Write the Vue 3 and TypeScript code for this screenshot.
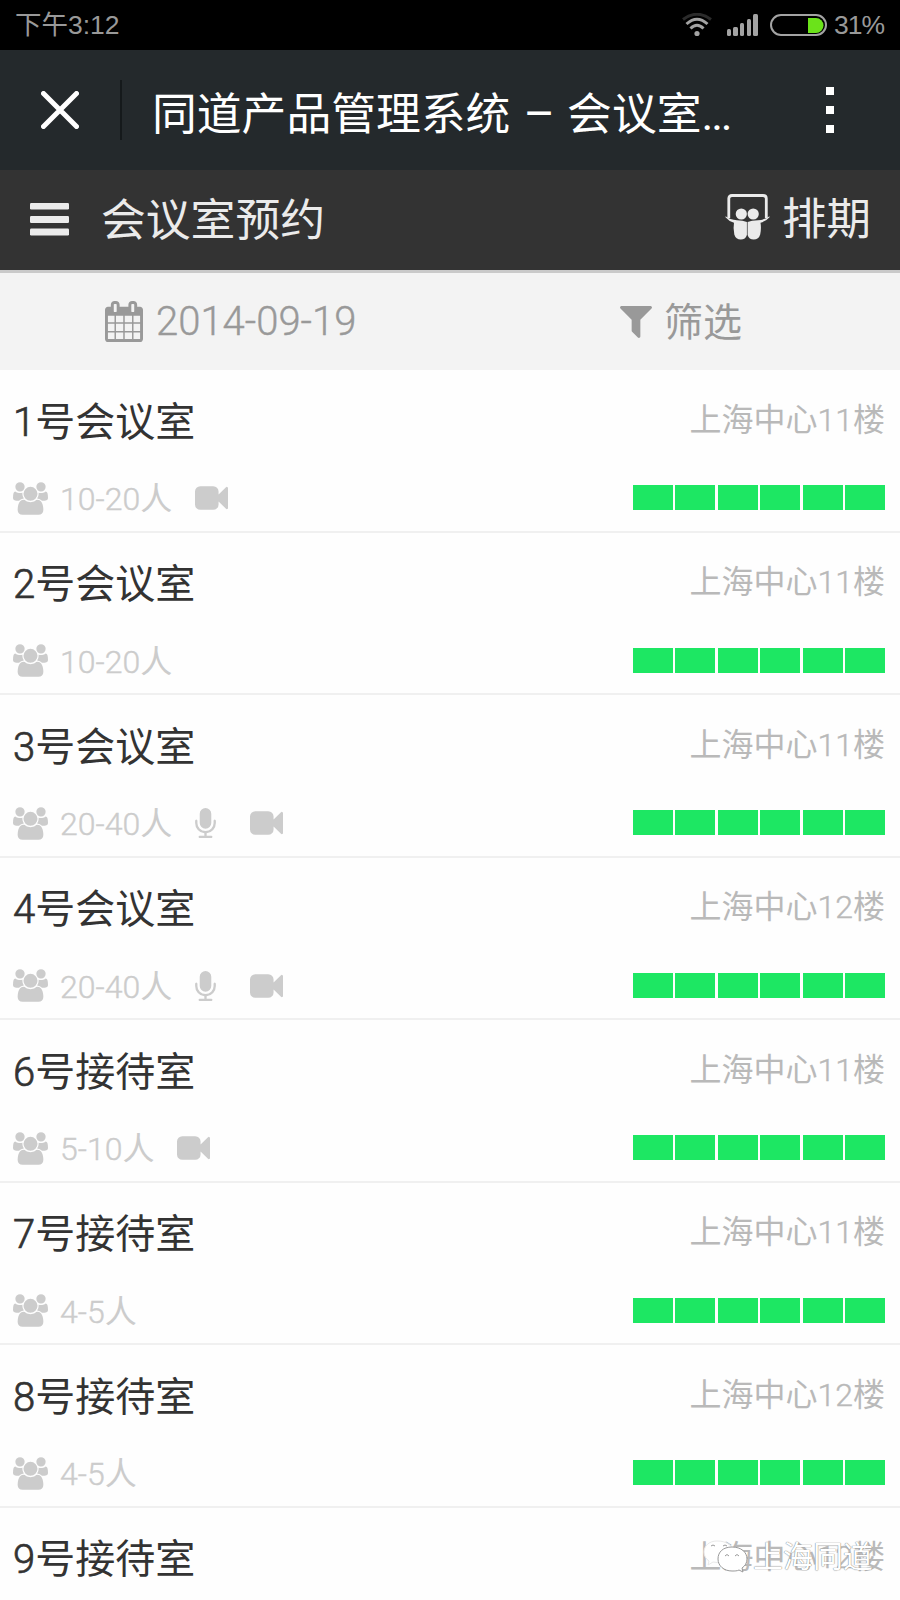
<script setup lang="ts">
interface Room {
  name: string
  floor: string
  seats: string
  mic?: boolean
  video?: boolean
}

interface Run {
  text: string
  latin: boolean
}

const rooms: Room[] = [
  { name: '1号会议室', floor: '上海中心11楼', seats: '10-20人', video: true },
  { name: '2号会议室', floor: '上海中心11楼', seats: '10-20人' },
  { name: '3号会议室', floor: '上海中心11楼', seats: '20-40人', mic: true, video: true },
  { name: '4号会议室', floor: '上海中心12楼', seats: '20-40人', mic: true, video: true },
  { name: '6号接待室', floor: '上海中心11楼', seats: '5-10人', video: true },
  { name: '7号接待室', floor: '上海中心11楼', seats: '4-5人' },
  { name: '8号接待室', floor: '上海中心12楼', seats: '4-5人' },
  { name: '9号接待室', floor: '上海中心12楼', seats: '4-5人' },
]

// Splits a label so that figures can be set lighter than the Chinese text.
const runs = (label: string): Run[] =>
  (label.match(/[\d-]+|[^\d-]+/g) ?? []).map((text) => ({ text, latin: /^[\d-]/.test(text) }))
</script>

<template>
  <div class="screen">
    <div class="status">
      <span class="time">下午3:12</span>
      <svg class="wifi" width="30" height="24" viewBox="0 0 30 24" fill="none" stroke-width="3">
        <path d="M1 6.500Q15 -4 29 6.500" stroke="#2b2b2b" />
        <path d="M4.500 11Q15 1.500 25.500 11" stroke="#a3a3a3" />
        <path d="M8.500 15.500Q15 9 21.500 15.500" stroke="#a3a3a3" />
        <circle cx="15" cy="20.500" r="2.600" fill="#a3a3a3" />
      </svg>
      <svg class="signal" width="31" height="22" viewBox="0 0 31 22" fill="#a3a3a3">
        <rect x="0" y="15" width="4" height="7" rx="1.500" />
        <rect x="6" y="13" width="5" height="9" rx="1.500" />
        <rect x="13" y="9" width="4" height="13" rx="1.500" />
        <rect x="20" y="5" width="4" height="17" rx="1.500" />
        <rect x="26" y="0" width="5" height="22" rx="1.500" />
      </svg>
      <svg class="battery" width="57" height="22" viewBox="0 0 57 22">
        <rect x="1" y="1" width="55" height="20" rx="10" fill="none" stroke="#a3a3a3" stroke-width="2" />
        <path d="M38 4h8a7.500 7.500 0 0 1 0 15h-8z" fill="#6be31a" />
      </svg>
      <span class="percent">31%</span>
    </div>

    <div class="browser">
      <svg class="close" width="38" height="38" viewBox="0 0 38 38" stroke="#fff" stroke-width="5" stroke-linecap="round">
        <path d="M2.500 2.500L35.500 35.500M35.500 2.500L2.500 35.500" />
      </svg>
      <i class="divider"></i>
      <span class="page-title">同道产品管理系统 <span class="dash">–</span> 会议室<span class="dots">...</span></span>
      <span class="more"><i></i><i></i><i></i></span>
    </div>

    <header class="app-bar">
      <svg class="bars" width="39" height="33" viewBox="0 0 39 33" fill="#ebebeb">
        <rect width="39" height="6.500" rx="1.200" />
        <rect y="13" width="39" height="7" rx="1.200" />
        <rect y="25.500" width="39" height="7" rx="1.200" />
      </svg>
      <span class="app-title">会议室预约</span>
      <svg class="share" width="45" height="46" viewBox="0 0 45 46">
        <path d="M3.800 24V4.500Q3.800 1.500 7 1.500H38Q41.300 1.500 41.300 4.500V24" fill="none" stroke="#ebebeb" stroke-width="2.800" />
        <circle cx="16.300" cy="20" r="5.600" fill="#ebebeb" />
        <circle cx="28.200" cy="20" r="5.600" fill="#ebebeb" />
        <path d="M.5 22.200Q5 25.800 12 26.200Q18 26.400 21.900 28V41Q20.500 45.600 15.800 45.600Q10.800 45.600 9.300 40.500Q8 34 9 28.700Q3.500 27 .500 23.200Z" fill="#ebebeb" />
        <path d="M44.500 22.200Q40 25.800 33 26.200Q26.500 26.400 22.600 28V41Q24 45.600 28.700 45.600Q33.700 45.600 35.200 40.500Q36.500 34 35.500 28.700Q41.500 27 44.500 23.200Z" fill="#ebebeb" />
      </svg>
      <span class="schedule">排期</span>
    </header>

    <div class="filters">
      <div class="filter date">
        <svg width="38" height="41" viewBox="64 0 1664 1792" preserveAspectRatio="none" fill="currentColor">
          <path d="M192 1664h288v-288H192v288zm352 0h320v-288H544v288zM192 1312h288V992H192v320zm352 0h320V992H544v320zM192 928h288V640H192v288zm736 736h320v-288H928v288zM544 928h320V640H544v288zm768 736h288v-288h-288v288zm-384-352h320V992H928v320zM576 448V160q0-13-9.500-22.500T544 128h-64q-13 0-22.500 9.500T448 160v288q0 13 9.500 22.500T480 480h64q13 0 22.500-9.500T576 448zm736 864h288V992h-288v320zM928 928h320V640H928v288zm384 0h288V640h-288v288zm32-480V160q0-13-9.500-22.500T1312 128h-64q-13 0-22.500 9.500T1216 160v288q0 13 9.500 22.500t22.500 9.500h64q13 0 22.500-9.500t9.500-22.500zm384-64v1280q0 52-38 90t-90 38H192q-52 0-90-38t-38-90V384q0-52 38-90t90-38h128v-96q0-66 47-113T480 0h64q66 0 113 47t47 113v96h384v-96q0-66 47-113t113-47h64q66 0 113 47t47 113v96h128q52 0 90 38t38 90z" />
        </svg>
        <span class="latin">2014-09-19</span>
      </div>
      <div class="filter pick">
        <svg width="32" height="32" viewBox="190 256 1412 1408" fill="currentColor">
          <path d="M1595 295q17 41-14 70l-493 493v742q0 42-39 59-13 5-25 5-27 0-45-19l-256-256q-19-19-19-45V858L211 365q-31-29-14-70 17-39 59-39h1280q42 0 59 39z" />
        </svg>
        <span>筛选</span>
      </div>
    </div>

    <ul class="rooms">
      <li v-for="room in rooms" :key="room.name" class="room">
        <div class="line top">
          <span class="name"><span v-for="(run, i) in runs(room.name)" :key="i" :class="{ latin: run.latin }">{{ run.text }}</span></span>
          <span class="floor"><span v-for="(run, i) in runs(room.floor)" :key="i" :class="{ latin: run.latin }">{{ run.text }}</span></span>
        </div>
        <div class="line meta">
          <svg class="users" width="35" height="33" viewBox="0 0 1920 1792" fill="currentColor">
            <path d="M593 896q-162 5-265 128H194q-82 0-138-40.500T0 865q0-353 124-353 6 0 43.500 21t97.500 42.500T384 597q67 0 133-23-5 37-5 66 0 139 81 256zm1071 637q0 120-73 189.500t-194 69.500H523q-121 0-194-69.500T256 1533q0-53 3.500-103.500t14-109T300 1212t43-97.500 62-81 85.500-53.500T602 960q10 0 43 21.500t73 48 107 48 135 21.500 135-21.500 107-48 73-48 43-21.500q61 0 111.500 20t85.500 53.500 62 81 43 97.500 26.500 108.500 14 109 3.500 103.500zM640 256q0 106-75 181t-181 75-181-75-75-181 75-181T384 0t181 75 75 181zm704 384q0 159-112.500 271.500T960 1024 688.500 911.500 576 640t112.500-271.500T960 256t271.500 112.500T1344 640zm576 225q0 78-56 118.500t-138 40.500h-134q-103-123-265-128 81-117 81-256 0-29-5-66 66 23 133 23 59 0 119-21.500t97.500-42.500 43.500-21q124 0 124 353zm-128-609q0 106-75 181t-181 75-181-75-75-181 75-181 181-75 181 75 75 181z" />
          </svg>
          <span class="seats"><span v-for="(run, i) in runs(room.seats)" :key="i" :class="{ latin: run.latin }">{{ run.text }}</span></span>
          <svg v-if="room.mic" class="mic" width="21" height="30" viewBox="320 0 1152 1664" fill="currentColor">
            <path d="M1472 704v128q0 221-147.500 384.500T960 1404v132h256q26 0 45 19t19 45-19 45-45 19H576q-26 0-45-19t-19-45 19-45 45-19h256v-132q-217-24-364.500-187.500T320 832V704q0-26 19-45t45-19 45 19 19 45v128q0 185 131.500 316.500T896 1280t316.500-131.500T1344 832V704q0-26 19-45t45-19 45 19 19 45zm-256-384v512q0 132-94 226t-226 94-226-94-94-226V320q0-132 94-226T896 0t226 94 94 226z" />
          </svg>
          <svg v-if="room.video" class="video" width="33" height="24" viewBox="0 256 1792 1280" fill="currentColor">
            <path d="M1792 352v1088q0 42-39 59-13 5-25 5-27 0-45-19l-403-403v166q0 119-84.500 203.500T992 1536H288q-119 0-203.500-84.500T0 1248V544q0-119 84.500-203.500T288 256h704q119 0 203.500 84.500T1280 544v165l403-402q18-19 45-19 12 0 25 5 39 17 39 59z" />
          </svg>
          <span class="slots"><i v-for="n in 6" :key="n"></i></span>
        </div>
      </li>
    </ul>

    <div class="watermark">
      <svg width="46" height="34" viewBox="0 0 46 34" fill="#fff" stroke="#999" stroke-width="1">
        <path d="M14 1C6 1 1 6 1 12c0 4 2 7 5 9l-1 4 5-3c11 2 20-2 20-10C30 5 23 1 14 1z" stroke="#e9e9e9" />
        <path d="M29 7C20 7 15 12 15 19s6 12 14 12c3 0 5 0 7-1l4 2-1-4c3-2 5-5 5-9 0-7-6-12-15-12z" />
        <path d="M8 6q2-2 4 0M20 6q2-2 4 0M22 16q2-3 4 0M32 16q2-3 4 0" fill="none" />
      </svg>
      <span>上海同道</span>
    </div>
  </div>
</template>

<style>
body {
  margin: 0;
}
</style>

<style scoped>
.screen {
  position: relative;
  width: 900px;
  height: 1600px;
  overflow: hidden;
  background: #fefefe;
  font-family: Roboto, "Noto Sans CJK SC", sans-serif;
  white-space: nowrap;
}

svg {
  display: block;
  flex: none;
}

.status {
  display: flex;
  align-items: center;
  box-sizing: border-box;
  height: 50px;
  padding-left: 15px;
  background: #000;
  color: #999;
  line-height: 50px;
}

.time {
  width: 667px;
  font-size: 26.500px;
}

.time,
.percent {
  font-family: "Liberation Sans", "Noto Sans CJK SC", sans-serif;
}

.signal {
  margin-left: 15px;
}

.battery {
  margin-left: 12px;
}

.percent {
  margin-left: 7px;
  font-size: 26.500px;
  letter-spacing: -1px;
}

.browser {
  display: flex;
  align-items: center;
  height: 120px;
  background: #24292c;
  color: #fff;
}

.close {
  margin-left: 41px;
}

.divider {
  width: 2px;
  height: 60px;
  margin-left: 41px;
  background: #15191b;
}

.page-title {
  width: 640px;
  margin-left: 30px;
  padding-top: 10px;
  font-size: 44.800px;
  line-height: 110px;
}

.dash {
  margin: 0 1px 0 2px;
  font-size: 48px;
  line-height: 0;
}

.dots {
  letter-spacing: -2.200px;
}

.more {
  display: flex;
  flex-direction: column;
  gap: 11px;
  margin-left: 34px;
}

.more i {
  width: 8px;
  height: 8px;
  background: #fff;
}

.app-bar {
  display: flex;
  align-items: center;
  height: 100px;
  border-bottom: 3px solid #c9c9c9;
  background: #333;
  color: #ebebeb;
  font-size: 44.500px;
  line-height: 98px;
}

.bars {
  margin: -2px 0 0 30px;
}

.app-title {
  width: 593px;
  margin-left: 32px;
  padding-top: 2px;
  font-size: 44.800px;
}

.share {
  margin: -7px 0 0 31px;
}

.schedule {
  margin-left: 12px;
}

.filters {
  display: grid;
  grid-template-columns: 1fr 1fr;
  height: 97px;
  background: #f3f3f3;
  color: #999;
}

.filter {
  display: flex;
  align-items: center;
  font-size: 40px;
}

.date {
  padding: 0 0 1px 105px;
  gap: 13px;
}

.pick {
  padding-left: 170px;
  gap: 12px;
  font-size: 39px;
}

.pick span {
  padding-bottom: 5px;
}

.rooms {
  margin: 0;
  padding: 0;
  list-style: none;
}

.room {
  box-sizing: border-box;
  height: 162.500px;
  padding: 22px 15px 0 13px;
  border-bottom: 2px solid #f0f0f0;
}

.line {
  display: flex;
  align-items: center;
}

.top {
  justify-content: space-between;
  height: 60px;
}

.name {
  padding-bottom: 7px;
  color: #333;
  font-size: 40px;
}

.floor {
  padding-bottom: 11px;
  color: #b9b9b9;
  font-size: 32px;
}

.latin {
  font-weight: 300;
  -webkit-text-stroke: 0.400px currentColor;
}

.name .latin {
  -webkit-text-stroke-width: 0.700px;
}

.meta {
  height: 60px;
  margin-top: 15.500px;
  color: #ccc;
}

.users {
  margin-top: 1px;
}

.seats {
  margin-left: 12px;
  padding-bottom: 3px;
  font-size: 32px;
}

.mic,
.video {
  margin: 1px 0 0 23px;
}

.mic + .video {
  margin-left: 34px;
}

.slots {
  display: flex;
  gap: 2.400px;
  margin-left: auto;
}

.slots i {
  width: 40px;
  height: 25px;
  background: #1de763;
}

.watermark {
  position: absolute;
  top: 1537px;
  left: 703px;
  display: flex;
  align-items: center;
  gap: 4px;
  height: 40px;
  color: #fff;
  font-size: 30px;
  text-shadow: 0 0 1px #777, 0 0 1px #999;
}

.watermark span {
  padding-bottom: 6px;
}
</style>
